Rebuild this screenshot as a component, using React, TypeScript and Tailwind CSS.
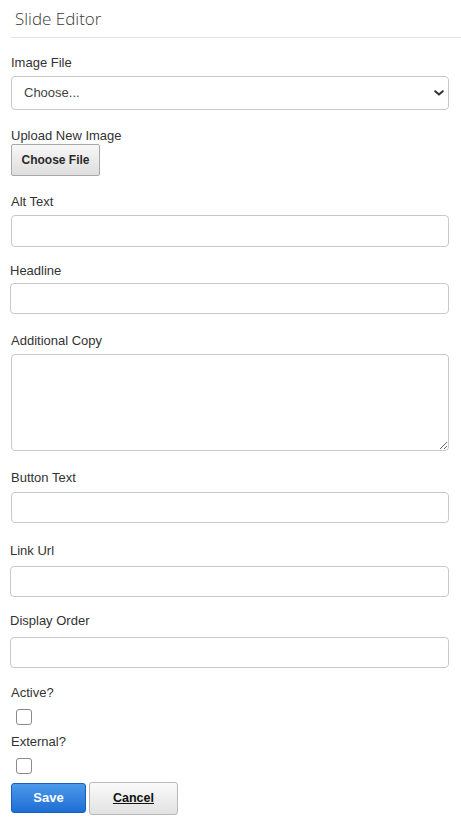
import React from 'react';

const sans = { fontFamily: '"Liberation Sans", Arial, sans-serif' };

type FieldProps = {
  label: string;
  labelMt: string;
  inputMt: string;
  height: string;
  shift?: boolean;
  textarea?: boolean;
};

function Field({ label, labelMt, inputMt, height, shift, textarea }: FieldProps) {
  return (
    <div className={shift ? '-ml-px' : ''}>
      <label className={`block ${labelMt} text-[13px] leading-[15px] text-[#333]`}>{label}</label>
      {textarea ? (
        <textarea
          className={`block ${inputMt} ${height} w-full rounded-[4px] border border-[#c9c9c9] bg-white px-3 py-1.5 text-[13px] outline-none`}
        />
      ) : (
        <input
          type="text"
          className={`block ${inputMt} ${height} w-full rounded-[4px] border border-[#c9c9c9] bg-white px-3 text-[13px] outline-none`}
        />
      )}
    </div>
  );
}

export default function App() {
  return (
    <div className="min-h-[826px] w-full bg-white pl-[11px]" style={sans}>
      <div
        className="border-b border-[#e3e3e3] pb-[6px] pl-[4px] pt-[7px] text-[17px] font-light leading-[24px] text-[#3a3a3a]"
        style={{ fontFamily: '"Open Sans", sans-serif' }}
      >
        Slide Editor
      </div>

      <form className="pr-[12px]" onSubmit={(e) => e.preventDefault()}>
        {/* image file */}
        <label className="mt-[17px] block text-[13px] leading-[15px] text-[#333]">Image File</label>
        <div className="relative mt-[6px]">
          <select className="block h-[34px] w-full appearance-none rounded-[4px] border border-[#c9c9c9] bg-white pl-[12px] text-[13px] text-[#444] outline-none">
            <option>Choose...</option>
          </select>
          <svg className="pointer-events-none absolute right-[5px] top-[14px]" width="10" height="6" viewBox="0 0 10 6">
            <path d="M1.2 1.2 L5 4.6 L8.8 1.2" fill="none" stroke="#333" strokeWidth="2" strokeLinecap="round" strokeLinejoin="round" />
          </svg>
        </div>

        {/* upload */}
        <label className="mt-[18px] block text-[13px] leading-[15px] text-[#333]">Upload New Image</label>
        <button
          type="button"
          className="mt-px flex h-[32px] w-[89px] items-center justify-center rounded-[2px] border border-[#a8a8a8] bg-gradient-to-b from-[#f7f7f7] to-[#dedede] text-[12px] font-bold text-[#2a2a2a]"
        >
          Choose File
        </button>

        <Field label="Alt Text" labelMt="mt-[18px]" inputMt="mt-[6px]" height="h-[32px]" />
        <Field label="Headline" labelMt="mt-[16px]" inputMt="mt-[5px]" height="h-[31px]" shift />
        <Field label="Additional Copy" labelMt="mt-[19px]" inputMt="mt-[6px]" height="h-[97px]" textarea />
        <Field label="Button Text" labelMt="mt-[19px]" inputMt="mt-[7px]" height="h-[31px]" />
        <Field label="Link Url" labelMt="mt-[20px]" inputMt="mt-[8px]" height="h-[31px]" shift />
        <Field label="Display Order" labelMt="mt-[16px]" inputMt="mt-[9px]" height="h-[31px]" shift />

        {/* checkboxes */}
        <label className="mt-[17px] block text-[13px] leading-[15px] text-[#333]">Active?</label>
        <input
          type="checkbox"
          className="ml-[5px] mt-[9px] block h-[16px] w-[16px] appearance-none rounded-[3px] border border-[#8a8a8a] bg-white"
        />
        <label className="mt-[9px] block text-[13px] leading-[15px] text-[#333]">External?</label>
        <input
          type="checkbox"
          className="ml-[5px] mt-[9px] block h-[16px] w-[16px] appearance-none rounded-[3px] border border-[#8a8a8a] bg-white"
        />

        <div className="mt-[8px] flex items-start gap-[3px]">
          <button
            type="submit"
            className="mt-px h-[30px] w-[75px] rounded-[3px] border border-[#1c5fb8] bg-gradient-to-b from-[#4b9aea] to-[#1d6dd4] text-[13px] font-bold text-white"
          >
            Save
          </button>
          <button
            type="button"
            className="h-[33px] w-[89px] rounded-[3px] border border-[#b9b9b9] bg-gradient-to-b from-[#fafafa] to-[#e2e2e2] text-[12.5px] font-bold text-[#111] underline"
          >
            Cancel
          </button>
        </div>
      </form>
    </div>
  );
}
